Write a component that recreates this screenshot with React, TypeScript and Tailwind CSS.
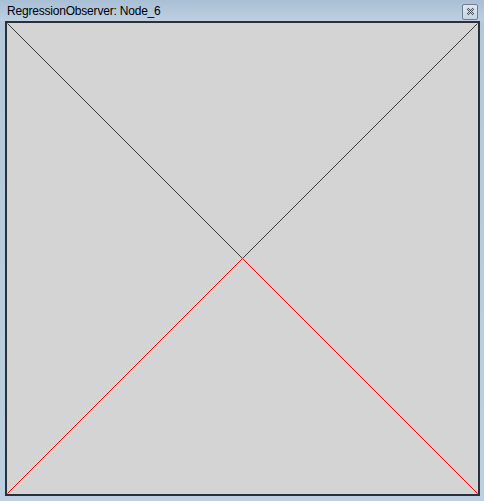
export default function App() {
  return (
    <div className="w-[484px] h-[501px] flex flex-col bg-gradient-to-b from-[#b4c8dc] to-[#bcd0e3] font-['Segoe_UI','Liberation_Sans',sans-serif]">
      <div className="h-[22px] flex items-center justify-between pl-[7px] pr-[6px] bg-gradient-to-b from-[#a9bfd5] to-[#bed0e2]">
        <span className="text-[12px] tracking-[-0.2px] text-black leading-none mt-[1px]">RegressionObserver: Node_6</span>
        <div className="w-[16px] h-[16px] mt-[2px] border border-[#6f7f8f] rounded-[2px] bg-gradient-to-b from-[#dfe8f1] to-[#c6d4e2] flex items-center justify-center">
          <svg width="9" height="9" viewBox="0 0 9 9">
            <path d="M1.5 1.5 L7.5 7.5 M7.5 1.5 L1.5 7.5" stroke="#3c4650" strokeWidth="2" />
            <path d="M1.5 1.5 L7.5 7.5 M7.5 1.5 L1.5 7.5" stroke="#f2f5f8" strokeWidth="0.8" />
          </svg>
        </div>
      </div>
      <div className="flex-1 pl-[5px] pr-[4px] pb-[5px]">
        <div className="w-full h-full border-2 border-[#2a3138] bg-[#d4d4d4]">
          <svg className="block w-full h-full" viewBox="0 0 471 471" preserveAspectRatio="none">
            <path d="M0.5 0.5 L235.5 235.5 L470.5 0.5" fill="none" stroke="#3a3a3a" strokeWidth="1" />
            <path d="M0.5 470.5 L235.5 235.5 L470.5 470.5" fill="none" stroke="#ff0000" strokeWidth="1" />
          </svg>
        </div>
      </div>
    </div>
  );
}
